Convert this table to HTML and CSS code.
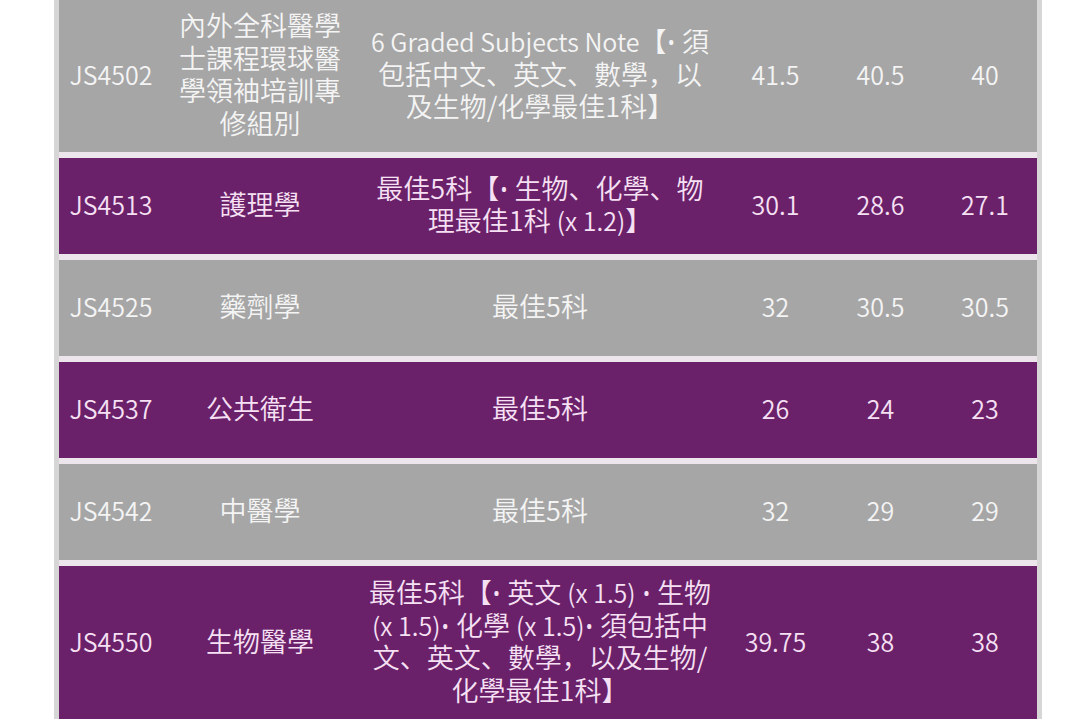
FILE: index.html
```html
<!DOCTYPE html>
<html lang="zh-Hans">
<head>
<meta charset="utf-8">
<title>JUPAS</title>
<link rel="stylesheet" href="styles.css">
</head>
<body>
<div class="table">
  <div class="row gray">
    <div class="cell num"><p>JS4502</p></div>
    <div class="cell name"><p>內外全科醫學士課程環球醫學領袖培訓專修組別</p></div>
    <div class="cell req"><p><span class="lat">6 Graded Subjects Note</span>【<span class="dot">•</span> 須包括中文、英文、數學，以及生物/化學最佳1科】</p></div>
    <div class="cell num"><p>41.5</p></div>
    <div class="cell num"><p>40.5</p></div>
    <div class="cell num"><p>40</p></div>
  </div>
  <div class="row purple">
    <div class="cell num"><p>JS4513</p></div>
    <div class="cell name"><p>護理學</p></div>
    <div class="cell req"><p>最佳5科【<span class="dot">•</span> 生物、化學、物理最佳1科 <span class="lat">(x 1.2)</span>】</p></div>
    <div class="cell num"><p>30.1</p></div>
    <div class="cell num"><p>28.6</p></div>
    <div class="cell num"><p>27.1</p></div>
  </div>
  <div class="row gray">
    <div class="cell num"><p>JS4525</p></div>
    <div class="cell name"><p>藥劑學</p></div>
    <div class="cell req"><p>最佳5科</p></div>
    <div class="cell num"><p>32</p></div>
    <div class="cell num"><p>30.5</p></div>
    <div class="cell num"><p>30.5</p></div>
  </div>
  <div class="row purple">
    <div class="cell num"><p>JS4537</p></div>
    <div class="cell name"><p>公共衛生</p></div>
    <div class="cell req"><p>最佳5科</p></div>
    <div class="cell num"><p>26</p></div>
    <div class="cell num"><p>24</p></div>
    <div class="cell num"><p>23</p></div>
  </div>
  <div class="row gray">
    <div class="cell num"><p>JS4542</p></div>
    <div class="cell name"><p>中醫學</p></div>
    <div class="cell req"><p>最佳5科</p></div>
    <div class="cell num"><p>32</p></div>
    <div class="cell num"><p>29</p></div>
    <div class="cell num"><p>29</p></div>
  </div>
  <div class="row purple">
    <div class="cell num"><p>JS4550</p></div>
    <div class="cell name"><p>生物醫學</p></div>
    <div class="cell req"><p>最佳5科【<span class="dot">•</span> 英文 <span class="lat">(x 1.5)</span> <span class="dot">•</span> 生物 <span class="lat">(x 1.5)</span><span class="dot">•</span> 化學 <span class="lat">(x 1.5)</span><span class="dot">•</span> 須包括中文、英文、數學，以及生物/化學最佳1科】</p></div>
    <div class="cell num"><p>39.75</p></div>
    <div class="cell num"><p>38</p></div>
    <div class="cell num"><p>38</p></div>
  </div>
</div>
</body>
</html>
```

FILE: styles.css
```css
html, body {
  margin: 0;
  padding: 0;
  background: #ffffff;
}

body {
  font-family: "Noto Sans CJK SC", "Noto Sans", sans-serif;
  font-size: 27px;
  font-weight: 350;
  line-height: 32.5px;
}

.table {
  width: 978px;
  margin: -1px 0 0 54px;
  border-left: 5px solid #d6d6d6;
  border-right: 5px solid #d6d6d6;
  background: #ece6ec;
  display: flex;
  flex-direction: column;
  gap: 6px;
}

.row {
  display: grid;
  grid-template-columns: 104px 194px 366px 105px 105px 104px;
  min-height: 96px;
}

.row:first-child {
  min-height: 0;
  height: 153px;
}

.row.gray {
  background: #a6a6a6;
  color: #f4f4f4;
}

.row.purple {
  background: #6a2169;
  color: #f6e0f4;
}

.cell {
  display: flex;
  align-items: center;
  justify-content: center;
  text-align: center;
  padding: 10px 0 14px;
}

.cell p {
  margin: 0;
}

.cell.num {
  font-size: 25px;
}

.cell.name {
  padding-left: 14px;
  padding-right: 14px;
}

.cell.req {
  padding-left: 8px;
  padding-right: 8px;
}

.lat {
  font-size: 25px;
  line-height: 1;
}

.dot {
  font-family: "Noto Sans", sans-serif;
  font-size: 25px;
  line-height: 1;
}
```
